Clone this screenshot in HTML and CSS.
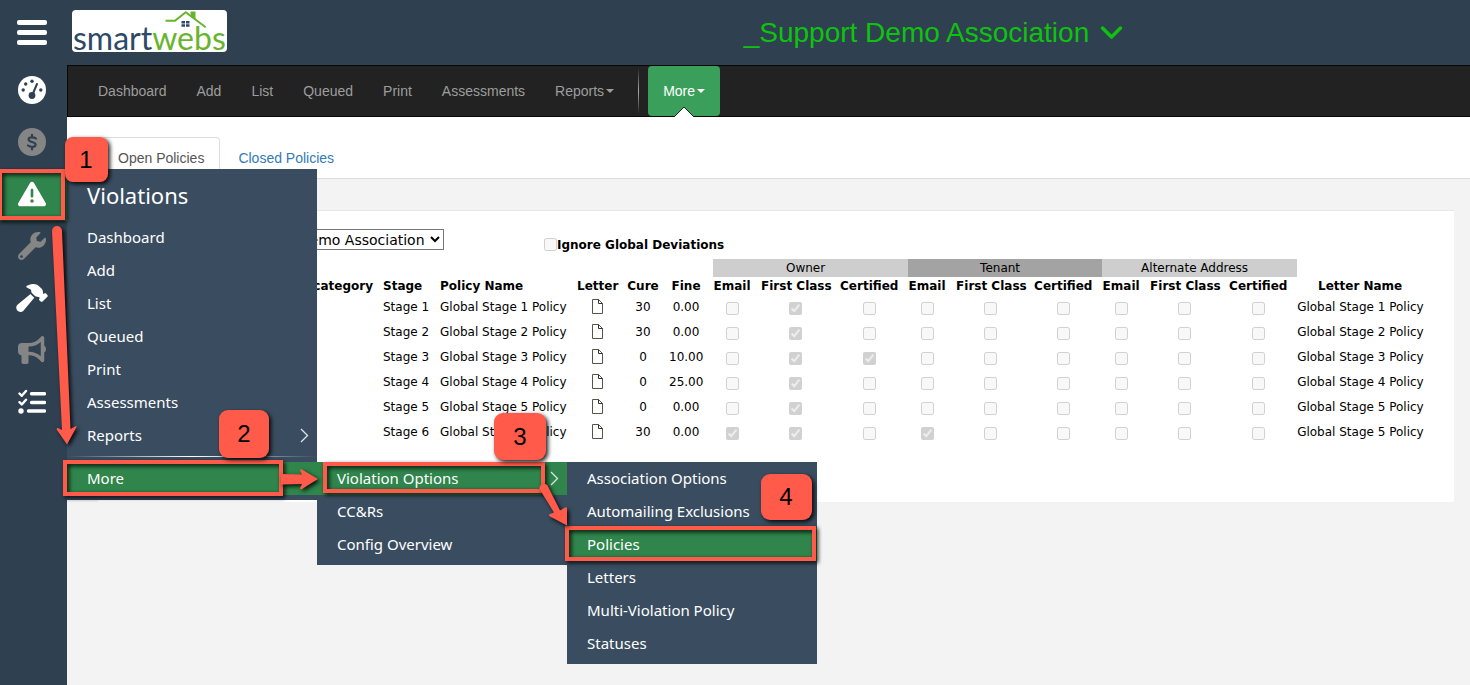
FILE: index.html
```
<!DOCTYPE html>
<html lang="en">
<head>
<meta charset="utf-8">
<title>Violation Policies</title>
<link rel="stylesheet" href="styles.css">
</head>
<body>
<svg class="defs" aria-hidden="true">
  <symbol id="doc" viewBox="0 0 12 15"><path d="M1.500 .5h6l4 4v10h-10z" fill="#fff" stroke="#555548"/><path d="M7.500 .5v4h4" fill="none" stroke="#333328"/></symbol>
  <symbol id="chev" viewBox="0 0 9 15"><path d="M1 1l6.500 6.500L1 14" fill="none" stroke="#dfe4e9" stroke-width="1.300"/></symbol>
</svg>

<header class="topbar">
  <div class="brand">
    <button class="burger" aria-label="Toggle menu"><span></span><span></span><span></span></button>
    <svg class="logo" viewBox="0 0 155 42" role="img" aria-label="smartwebs">
      <rect width="155" height="42" rx="4" fill="#fff"/>
      <text x="1" y="40" class="logo-text"><tspan fill="#2c4a68">smart</tspan><tspan fill="#69b42e">webs</tspan></text>
      <path d="M93.500 10.700h9.500L113.700 2.200l20 15" fill="none" stroke="#69b42e" stroke-width="2"/>
      <path d="M118.500 1.500h5v9l-5-4z" fill="#69b42e"/>
      <path d="M109.500 11h3.500v2.500h-3.500zM114 11h3.500v2.500h-3.500zM109.500 14.300h3.500v2.500h-3.500zM114 14.300h3.500v2.500h-3.500z" fill="#2c4a68"/>
    </svg>
  </div>
  <button class="assoc">_Support Demo Association
    <svg width="23" height="16" viewBox="0 0 23 16"><path d="M2.500 3l9 9 9-9" fill="none" stroke="#0fc20f" stroke-width="3.500" stroke-linecap="round" stroke-linejoin="round"/></svg>
  </button>
</header>

<div class="shell">
  <aside class="rail">
    <a href="#" class="rail-item" aria-label="Dashboard"><svg viewBox="0 0 28 28"><circle cx="14" cy="14" r="14" fill="#fff"/><g fill="#2f4050"><circle cx="14" cy="5.200" r="1.700"/><circle cx="7.700" cy="8" r="1.700"/><circle cx="5.200" cy="14" r="1.700"/><circle cx="22.800" cy="14" r="1.700"/><circle cx="14" cy="19.500" r="3.400"/></g><path d="M14.500 18.500L19 8" stroke="#2f4050" stroke-width="2" stroke-linecap="round"/></svg></a>
    <a href="#" class="rail-item dim" aria-label="Accounting"><svg viewBox="0 0 28 28"><circle cx="14" cy="14" r="14"/><path d="M18 10.500C16.500 9.300 10.600 8.200 10.600 11.500c0 3.200 7 1.700 7 5 0 3.300-5.800 2.500-7.600 1M14 6.800v2M14 19.500v2" fill="none" stroke="#2f4050" stroke-width="2.200" stroke-linecap="round"/></svg></a>
    <a href="#" class="rail-item active" aria-label="Violations"><svg viewBox="0 0 512 512"><path d="M256 32c14.200 0 27.300 7.500 34.500 19.800l216 368c7.300 12.400 7.300 27.700.2 40.100S486.300 480 472 480H40c-14.300 0-27.600-7.700-34.700-20.100s-7-27.800.2-40.100l216-368C228.700 39.500 241.800 32 256 32zm0 128c-13.300 0-24 10.700-24 24V296c0 13.300 10.700 24 24 24s24-10.700 24-24V184c0-13.300-10.700-24-24-24zm32 224a32 32 0 1 0 -64 0 32 32 0 1 0 64 0z"/></svg></a>
    <a href="#" class="rail-item dim" aria-label="Work orders"><svg viewBox="0 0 512 512"><path d="M507.730 109.100c-2.240-9.030-13.540-12.090-20.120-5.510l-74.360 74.360-67.880-11.310-11.310-67.880 74.360-74.360c6.620-6.620 3.430-17.900-5.660-20.160-47.380-11.740-99.550.91-136.580 37.930-39.640 39.640-50.550 97.100-34.050 147.200L18.740 402.760c-24.990 24.990-24.990 65.510 0 90.500 24.990 24.990 65.510 24.990 90.500 0l213.210-213.210c50.120 16.710 107.470 5.680 147.370-34.220 37.070-37.070 49.700-89.320 37.910-136.730zM64 472c-13.250 0-24-10.750-24-24 0-13.260 10.750-24 24-24s24 10.740 24 24c0 13.250-10.750 24-24 24z"/></svg></a>
    <a href="#" class="rail-item" aria-label="Architectural"><svg class="wide" viewBox="0 0 576 512"><path d="M413.500 237.500c-28.200 4.800-58.200-3.600-80-25.400l-38.100-38.100C280.400 159 272 138.800 272 117.600V105.500L192.300 62c-5.300-2.900-8.600-8.600-8.300-14.700s3.900-11.500 9.500-14l47.200-21C259.100 4.200 279 0 299.200 0h18.100c36.700 0 72 14 98.700 39.100l44.600 42c24.200 22.800 33.200 55.700 26.600 86L503 183l8-8c9.400-9.400 24.600-9.400 33.900 0l24 24c9.400 9.400 9.400 24.600 0 33.900l-88 88c-9.400 9.400-24.600 9.400-33.900 0l-24-24c-9.400-9.400-9.400-24.600 0-33.900l8-8-17.500-17.500zM27.400 377.100L260.900 182.600c3.500 4.900 7.500 9.600 11.800 14l38.100 38.100c6 6 12.400 11.200 19.200 15.700L134.900 484.600c-14.500 17.400-36 27.400-58.600 27.400C34.100 512 0 477.800 0 435.700c0-22.600 10.100-44.100 27.400-58.600z"/></svg></a>
    <a href="#" class="rail-item dim" aria-label="Communication"><svg viewBox="0 0 512 512"><path d="M480 32c0-12.900-7.800-24.600-19.800-29.600s-25.700-2.200-34.900 6.900L381.700 53c-48 48-113.100 75-181 75H192 160 64c-35.300 0-64 28.700-64 64v96c0 35.300 28.700 64 64 64l0 128c0 17.700 14.300 32 32 32h64c17.700 0 32-14.300 32-32V352l8.700 0c67.900 0 133 27 181 75l43.600 43.600c9.200 9.200 22.900 11.900 34.900 6.900s19.800-16.600 19.800-29.600V300.400c18.600-8.800 32-32.500 32-60.400s-13.400-51.600-32-60.400V32zm-64 76.700V240 371.300C357.200 317.800 280.500 288 200.700 288H192V192h8.700c79.800 0 156.500-29.800 215.300-83.300z"/></svg></a>
    <a href="#" class="rail-item" aria-label="Tasks"><svg viewBox="0 0 28 28"><g fill="none" stroke="#fff" stroke-linecap="round" stroke-linejoin="round"><path d="M1.500 5.500l2.300 2.300L8 3M1.500 14.200l2.300 2.300L8 11.700" stroke-width="2.400"/><path d="M13.500 5.800h13M13.500 14.500h13M10.500 23h16" stroke-width="3.400"/></g><circle cx="3" cy="23" r="2.700"/></svg></a>

    <nav class="flyout main-menu" aria-label="Violations menu">
      <h2>Violations</h2>
      <ul>
        <li><a href="#">Dashboard</a></li>
        <li><a href="#">Add</a></li>
        <li><a href="#">List</a></li>
        <li><a href="#">Queued</a></li>
        <li><a href="#">Print</a></li>
        <li><a href="#">Assessments</a></li>
        <li><a href="#">Reports<svg class="chev"><use href="#chev"/></svg></a></li>
        <li class="rule"></li>
        <li class="open"><a href="#">More</a>
          <ul class="flyout sub">
            <li class="open"><a href="#">Violation Options<svg class="chev"><use href="#chev"/></svg></a>
              <ul class="flyout sub">
                <li><a href="#">Association Options</a></li>
                <li><a href="#">Automailing Exclusions</a></li>
                <li class="open"><a href="#">Policies</a></li>
                <li><a href="#">Letters</a></li>
                <li><a href="#">Multi-Violation Policy</a></li>
                <li><a href="#">Statuses</a></li>
              </ul>
            </li>
            <li><a href="#">CC&amp;Rs</a></li>
            <li><a href="#">Config Overview</a></li>
          </ul>
        </li>
      </ul>
    </nav>
  </aside>

  <div class="content">
    <nav class="navbar" aria-label="Violations">
      <a href="#">Dashboard</a><a href="#">Add</a><a href="#">List</a><a href="#">Queued</a><a href="#">Print</a><a href="#">Assessments</a><a href="#">Reports<i class="caret"></i></a>
      <span class="nav-rule"></span>
      <a href="#" class="current">More<i class="caret"></i><svg class="notch" viewBox="0 0 20 11"><path d="M0 11L10 1l10 10z" fill="#fff"/><path d="M0 11L10 1l10 10" fill="none" stroke="#222"/></svg></a>
    </nav>
    <div class="tabs">
      <a href="#" class="tab selected">Open Policies</a>
      <a href="#" class="tab">Closed Policies</a>
    </div>
    <main class="panel">
      <form class="filters">
        <select aria-label="Association"><option>_Support Demo Association</option></select>
        <label><input type="checkbox" disabled><span>Ignore Global Deviations</span></label>
      </form>
      <table>
        <colgroup><col class="c-cat"><col class="c-stage"><col class="c-policy"><col class="c-letter"><col class="c-cure"><col class="c-fine"><col class="c-email"><col class="c-first"><col class="c-cert"><col class="c-email"><col class="c-first-narrow"><col class="c-cert"><col class="c-email"><col class="c-first"><col class="c-cert"><col class="c-name"></colgroup>
        <thead>
          <tr class="groups"><td colspan="6"></td><td colspan="3" class="g">Owner</td><td colspan="3" class="g dark">Tenant</td><td colspan="3" class="g">Alternate Address</td><td></td></tr>
          <tr><th class="r">Subcategory</th><th class="l">Stage</th><th class="l">Policy Name</th><th>Letter</th><th>Cure</th><th>Fine</th><th>Email</th><th>First Class</th><th>Certified</th><th>Email</th><th>First Class</th><th>Certified</th><th>Email</th><th>First Class</th><th>Certified</th><th class="last">Letter Name</th></tr>
        </thead>
        <tbody>
          <tr><td></td><td class="l">Stage 1</td><td class="l">Global Stage 1 Policy</td><td><svg class="doc"><use href="#doc"/></svg></td><td>30</td><td>0.00</td><td><input type="checkbox" disabled></td><td><input type="checkbox" disabled checked></td><td><input type="checkbox" disabled></td><td><input type="checkbox" disabled></td><td><input type="checkbox" disabled></td><td><input type="checkbox" disabled></td><td><input type="checkbox" disabled></td><td><input type="checkbox" disabled></td><td><input type="checkbox" disabled></td><td class="l last">Global Stage 1 Policy</td></tr>
          <tr><td></td><td class="l">Stage 2</td><td class="l">Global Stage 2 Policy</td><td><svg class="doc"><use href="#doc"/></svg></td><td>30</td><td>0.00</td><td><input type="checkbox" disabled></td><td><input type="checkbox" disabled checked></td><td><input type="checkbox" disabled></td><td><input type="checkbox" disabled></td><td><input type="checkbox" disabled></td><td><input type="checkbox" disabled></td><td><input type="checkbox" disabled></td><td><input type="checkbox" disabled></td><td><input type="checkbox" disabled></td><td class="l last">Global Stage 2 Policy</td></tr>
          <tr><td></td><td class="l">Stage 3</td><td class="l">Global Stage 3 Policy</td><td><svg class="doc"><use href="#doc"/></svg></td><td>0</td><td>10.00</td><td><input type="checkbox" disabled></td><td><input type="checkbox" disabled checked></td><td><input type="checkbox" disabled checked></td><td><input type="checkbox" disabled></td><td><input type="checkbox" disabled></td><td><input type="checkbox" disabled></td><td><input type="checkbox" disabled></td><td><input type="checkbox" disabled></td><td><input type="checkbox" disabled></td><td class="l last">Global Stage 3 Policy</td></tr>
          <tr><td></td><td class="l">Stage 4</td><td class="l">Global Stage 4 Policy</td><td><svg class="doc"><use href="#doc"/></svg></td><td>0</td><td>25.00</td><td><input type="checkbox" disabled></td><td><input type="checkbox" disabled checked></td><td><input type="checkbox" disabled></td><td><input type="checkbox" disabled></td><td><input type="checkbox" disabled></td><td><input type="checkbox" disabled></td><td><input type="checkbox" disabled></td><td><input type="checkbox" disabled></td><td><input type="checkbox" disabled></td><td class="l last">Global Stage 4 Policy</td></tr>
          <tr><td></td><td class="l">Stage 5</td><td class="l">Global Stage 5 Policy</td><td><svg class="doc"><use href="#doc"/></svg></td><td>0</td><td>0.00</td><td><input type="checkbox" disabled></td><td><input type="checkbox" disabled checked></td><td><input type="checkbox" disabled></td><td><input type="checkbox" disabled></td><td><input type="checkbox" disabled></td><td><input type="checkbox" disabled></td><td><input type="checkbox" disabled></td><td><input type="checkbox" disabled></td><td><input type="checkbox" disabled></td><td class="l last">Global Stage 5 Policy</td></tr>
          <tr><td></td><td class="l">Stage 6</td><td class="l">Global Stage 5 Policy</td><td><svg class="doc"><use href="#doc"/></svg></td><td>30</td><td>0.00</td><td><input type="checkbox" disabled checked></td><td><input type="checkbox" disabled checked></td><td><input type="checkbox" disabled></td><td><input type="checkbox" disabled checked></td><td><input type="checkbox" disabled></td><td><input type="checkbox" disabled></td><td><input type="checkbox" disabled></td><td><input type="checkbox" disabled></td><td><input type="checkbox" disabled></td><td class="l last">Global Stage 5 Policy</td></tr>
        </tbody>
      </table>
    </main>
  </div>
</div>

<!-- Step callouts drawn over the page -->
<svg class="callouts" width="830" height="570" viewBox="0 0 830 570">
  <g class="boxes">
    <rect x="0" y="171" width="63" height="47"/>
    <rect x="65" y="462" width="216" height="32"/>
    <rect x="325" y="464" width="218" height="27"/>
    <rect x="567" y="528" width="247" height="31"/>
  </g>
  <g class="arrows">
    <path d="M52 231a5 5 0 0 1 10 0l8.500 198 5.500-3q1 0 0 2l-9 16.500L57 430q-1-2 1-2l4 2z"/>
    <path d="M281 474l21 .5-2-4q0-2 2-1l16 9.500-16 10q-2 1-2-1l2-4-21 .5z"/>
    <path d="M539.500 489a4.500 4.500 0 0 1 8-3.500l12.500 25 5-3q2-1 2 1v17l-17-9q-2-2 0-2.500l4-1.500z"/>
  </g>
  <g class="badges">
    <rect x="65" y="137" width="43" height="45" rx="8"/>
    <rect x="219" y="410" width="50" height="48" rx="9"/>
    <rect x="494" y="413" width="52" height="47" rx="9"/>
    <rect x="761" y="474" width="51" height="46" rx="9"/>
  </g>
  <g class="numbers">
    <text x="86" y="168">1</text>
    <text x="244" y="442">2</text>
    <text x="520" y="445">3</text>
    <text x="786" y="505">4</text>
  </g>
</svg>
</body>
</html>
```
FILE: styles.css
```
* { box-sizing: border-box; }
body {
  margin: 0;
  min-height: 100vh;
  display: flex;
  flex-direction: column;
  position: relative;
  background: #f3f3f3;
  font: 14px/20px "Liberation Sans", Arial, sans-serif;
}
a { text-decoration: none; color: inherit; }
ul { list-style: none; margin: 0; padding: 0; }
button { border: 0; background: none; padding: 0; font: inherit; }
.defs { position: absolute; width: 0; height: 0; }

.topbar { display: flex; align-items: center; height: 65px; background: #2f4050; }
.brand { flex: 0 0 27%; display: flex; align-items: center; gap: 25px; padding-left: 17px; }
.burger { width: 30px; display: grid; gap: 5px; }
.burger span { height: 5px; border-radius: 2px; background: #fff; }
.logo { width: 155px; height: 42px; margin-bottom: 3px; overflow: visible; }
.logo-text { font: 32px Lato, "Open Sans", sans-serif; }
.assoc { flex: 1; display: flex; justify-content: center; align-items: center; gap: 11px; color: #0fc20f; font-size: 28px; line-height: 32px; }

.shell { flex: 1; display: flex; }
.rail { position: relative; flex: 0 0 67px; background: #2f4050; }
.rail-item { display: flex; align-items: center; height: 52px; padding-left: 18px; fill: #fff; }
.rail-item svg { width: 28px; height: 28px; margin-bottom: 2px; }
.rail-item svg.wide { width: 32px; margin-left: -2px; }
.rail-item.dim { fill: #858585; }
.rail-item.active { background: #2f854b; }

.flyout { width: 250px; background: #3a4d60; color: #fff; font: 15px/33px "Noto Sans", Lato, sans-serif; padding-bottom: 4px; }
.main-menu { position: absolute; left: 100%; top: 104px; z-index: 2; padding-bottom: 5px; }
.main-menu h2 { margin: 0; padding: 10px 20px; font-size: 22px; line-height: 32px; font-weight: 400; }
.flyout li { position: relative; }
.flyout a { display: flex; align-items: center; justify-content: space-between; padding: 0 8px 0 20px; }
.flyout .open > a { background: #2f854b; }
.chev { width: 9px; height: 15px; }
.rule { height: 2px; margin: 4px 0; background: linear-gradient(90deg, transparent, #fff 50%, transparent); background-size: 100% 1px; background-repeat: no-repeat; }
.sub { position: absolute; left: 100%; top: 0; }

.content { flex: 1; min-width: 0; }
.navbar { display: flex; height: 52px; padding-left: 15px; background: #222; border: 1px solid #080808; border-right: 0; color: #9d9d9d; line-height: 50px; }
.navbar a { padding: 0 15px; display: flex; align-items: center; gap: 2px; }
.caret { border: 4px solid transparent; border-top-color: currentColor; border-bottom: 0; }
.nav-rule { width: 1px; margin: 2px 9px; background: linear-gradient(transparent, #aaa 50%, transparent); }
.navbar .current { position: relative; background: #3a9f5a; color: #fff; border-radius: 4px; }
.notch { position: absolute; left: 26px; bottom: -1px; width: 20px; height: 11px; }

.tabs { display: flex; gap: 2px; padding: 20px 35px 0; background: #fff; border-bottom: 1px solid #ddd; color: #337ab7; }
.tab { padding: 10px 15px; border: 1px solid transparent; border-bottom: 0; border-radius: 4px 4px 0 0; }
.tab.selected { border-color: #ddd; color: #555; }

.panel { margin: 31px 16px 0 31px; padding: 18px 0 58px; background: #fff; border-top: 1px solid #e7e7e7; color: #000; font: 12px/16px "DejaVu Sans", Verdana, sans-serif; }
.filters { display: flex; padding-left: 129px; gap: 100px; }
.filters select { width: 217px; height: 21px; font: 14px/18px "DejaVu Sans", Verdana, sans-serif; padding: 0; background: #fff; border: 1px solid #767676; border-radius: 0; color: #000; }
.filters label { display: flex; align-items: center; height: 30px; font-weight: 700; }
.filters span { padding-top: 2px; }
input { width: 13px; height: 13px; margin: 0; }
table { border-collapse: collapse; table-layout: fixed; width: 1324px; white-space: nowrap; }
td, th { padding: 0 10px 0 0; text-align: center; font-weight: 400; }
th { height: 17px; font-weight: 700; }
tbody td { height: 25px; }
td input { display: block; margin: 4px auto 0; }
.l { text-align: left; }
.r { text-align: right; }
td.last, th.last { padding: 0; }
.groups td { height: 18px; }
.g { background: #cecece; }
.g.dark { background: #a3a3a3; }
.doc { display: block; width: 12px; height: 15px; margin: 0 auto; }
.c-cat { width: 285px; }
.c-stage { width: 57px; }
.c-policy { width: 137px; }
.c-letter { width: 50px; }
.c-cure { width: 42px; }
.c-fine { width: 44px; }
.c-email { width: 48px; }
.c-first { width: 79px; }
.c-first-narrow { width: 78px; }
.c-cert { width: 68px; }
.c-name { width: 126px; }

.callouts { position: absolute; left: 0; top: 0; z-index: 5; pointer-events: none; }
.boxes { fill: none; stroke: #ff5a4a; stroke-width: 4; }
.arrows, .badges { fill: #ff5a4a; }
.boxes, .arrows, .badges { filter: drop-shadow(2px 2px 2px rgba(0, 0, 0, .9)); }
.numbers { font: 24px "Liberation Sans", Arial, sans-serif; text-anchor: middle; fill: #000; }
```
